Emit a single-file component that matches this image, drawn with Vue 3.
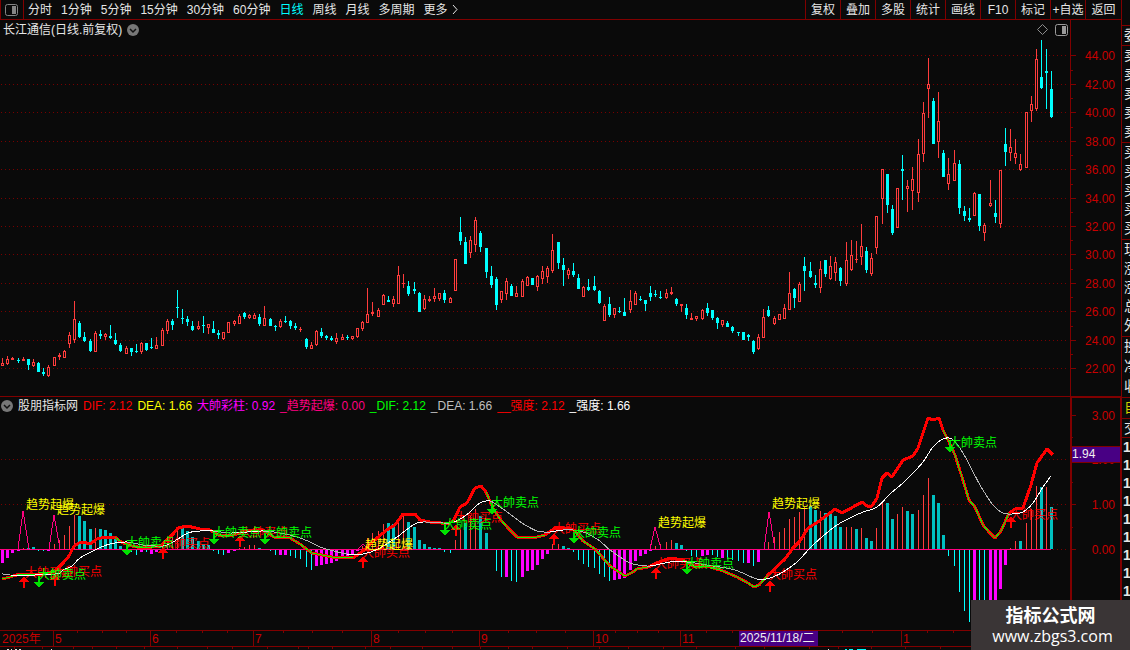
<script setup>
const periods = ['分时', '1分钟', '5分钟', '15分钟', '30分钟', '60分钟', '日线', '周线', '月线', '多周期']
const tools = ['复权', '叠加', '多股', '统计', '画线', 'F10', '标记', '+自选', '返回']

const quoteGroups = [
  { size: 'mid', rows: ['委'] },
  { size: 'mid', rows: ['卖', '卖', '卖', '卖', '卖'] },
  { size: 'mid', rows: ['买', '买', '买', '买', '买'] },
  { size: 'mid', rows: ['现', '涨', '涨', '总', '外'] },
  { size: 'tall', rows: ['换', '净', '收'] },
  { size: 'tall gold', rows: ['自'] },
  { size: 'short', rows: ['交'] },
  { size: 'short ticks', rows: ['1', '1', '1', '1', '1', '1', '1', '1', '1'] }
]

const legend = [
  { text: 'DIF: 2.12', tone: 'red' },
  { text: 'DEA: 1.66', tone: 'yellow' },
  { text: '大帥彩柱: 0.92', tone: 'magenta' },
  { text: '_趋势起爆: 0.00', tone: 'pink' },
  { text: '_DIF: 2.12', tone: 'green' },
  { text: '_DEA: 1.66', tone: 'grey' },
  { text: '__强度: 2.12', tone: 'red' },
  { text: '_强度: 1.66', tone: 'white' }
]

const xOf = i => Math.floor(2.6 + (i * 36) / 7)

/* direction, high, body top, body bottom, low */
const candleData = `
r358 363 366 366;r356 359 364 365;r357 358 360 360;c358 360 361 363;r357 359 361 361;c359 359 365 370;r359 362 366 367;
c362 363 372 372;c368 372 374 376;r365 367 376 377;r357 357 366 366;r353 355 357 360;r350 351 358 358;r332 335 344 348;
r301 319 340 343;c321 323 337 338;c332 337 341 342;c339 341 351 352;r331 333 352 352;c330 334 336 339;r333 334 337 340;
c325 336 338 339;c333 340 344 345;c343 345 351 352;r346 348 354 354;c348 348 352 356;c344 351 352 353;r342 343 352 354;
c343 343 350 351;c338 347 348 349;r337 345 349 349;r328 330 346 346;r319 321 331 334;c319 321 325 330;c290 307 308 318;
c309 318 319 324;c316 319 322 326;c321 326 330 331;r321 326 329 330;c316 325 326 333;r324 324 328 334;c321 329 333 333;
c330 333 335 339;r332 332 339 340;r322 322 333 333;r320 321 324 326;r314 316 324 324;c312 313 317 319;r314 315 318 319;
r313 315 319 319;c314 317 324 326;r306 318 326 326;c318 319 326 326;c325 326 327 331;r319 321 327 328;c316 321 322 323;
c320 321 326 329;c323 326 328 330;r327 329 330 332;c338 339 347 349;r342 345 349 349;r330 331 345 346;c328 332 336 338;
c335 336 338 340;c336 338 340 341;r333 338 342 344;r334 337 340 340;c335 337 338 340;r336 336 339 340;r328 328 337 338;
r321 322 329 331;r288 314 323 323;r302 312 314 316;r308 310 317 317;r294 295 305 305;c296 300 302 302;r296 299 304 307;
r266 275 304 304;r274 283 284 288;c281 286 294 296;c282 289 291 294;c292 293 312 312;r295 299 309 310;r296 299 301 302;
r288 296 299 302;r293 293 299 301;c290 293 300 303;r297 298 303 303;r259 259 291 291;c217 232 241 245;c237 242 264 264;
r236 240 253 258;r217 220 245 252;c231 233 247 252;c248 248 272 278;c266 276 285 288;c277 279 305 310;r291 291 300 303;
r278 281 294 300;c284 286 296 296;r286 293 297 297;r279 281 297 297;r276 277 286 286;c278 278 285 285;r275 276 287 291;
r266 271 279 284;r266 268 277 283;r234 250 271 273;c242 242 263 269;c258 265 270 286;r268 270 275 279;c263 271 275 277;
c274 278 289 289;r286 287 297 297;c279 287 290 291;c276 286 290 291;c290 291 303 304;r304 306 321 321;c297 304 315 317;
r308 308 315 318;c307 311 312 313;c298 312 316 316;r290 301 310 313;r291 293 305 305;c296 299 300 301;c300 300 304 311;
c286 293 297 301;c290 294 295 297;c291 297 298 299;r289 293 298 299;r287 292 294 295;c298 299 304 306;r304 304 306 312;
c304 308 315 319;r313 318 320 320;r316 316 319 321;r309 310 319 320;c303 308 313 316;c310 310 318 320;c317 318 323 329;
r320 320 325 327;c321 323 327 327;c326 327 331 333;c332 332 333 336;c332 332 340 340;c334 335 337 341;c340 341 352 354;
r334 337 349 350;r309 317 338 338;c306 310 316 317;r316 318 324 325;r314 314 320 320;r304 308 319 319;r272 293 310 310;
c288 289 298 308;r282 284 302 302;c257 266 271 291;c262 271 277 278;c275 283 285 288;r261 269 288 293;c260 260 274 277;
r256 266 279 280;r257 262 273 281;c267 268 281 286;r242 260 284 286;r240 255 270 271;r241 259 260 263;r224 246 257 265;
c247 251 270 273;r253 258 274 276;r216 216 248 254;r169 169 199 224;c174 174 205 213;c205 209 233 235;r188 188 228 228;
c155 169 171 200;r180 186 189 212;r167 179 191 210;r139 154 193 202;r102 113 154 162;r58 84 89 118;c98 101 144 144;
r92 121 142 158;c150 153 177 177;r158 174 184 190;r150 163 181 181;c160 164 208 214;c206 211 216 221;c208 218 220 222;
r192 193 216 216;c194 194 226 231;r223 225 233 241;r180 203 206 207;c200 213 217 223;r170 170 224 228;c128 144 152 166;
r129 147 153 161;r139 153 158 164;r154 164 170 171;r112 112 168 168;r96 104 111 122;r49 59 109 111;c40 77 88 89;
c49 71 73 109;c71 89 117 118`

const box = (x, y, w, h) => `M${x} ${y}h${w}v${h}h${-w}z`

const candlePaths = { r: '', c: '' }
candleData.trim().split(';').forEach((entry, i) => {
  const s = entry.trim()
  const kind = s[0]
  const [high, top, bottom, low] = s.slice(1).split(' ').map(Number)
  const x = xOf(i)
  let d = box(x - 1, top, 3, Math.max(1, bottom - top))
  if (kind === 'r' && bottom - top > 2) d += box(x, top + 1, 1, bottom - top - 2)
  if (top > high) d += box(x, high, 1, top - high)
  if (low > bottom) d += box(x, bottom, 1, low - bottom)
  candlePaths[kind] += d
})

/* r: thin up, t: wide up, c: thin down, m: wide down */
const barData = `
m563 m558 m553 m551 r548 t548 t547 c551 c551 m551 r544 r540 r535 r526 r515 t516 t521 t529 r528 t529 t530 t533 t538 t546
c551 c552 c555 m552 c552 m554 m552 r547 r540 r535 r528 t528 t531 t537 t541 t544 t545 c551 c554 c555 m553 m551 r548 r547
r545 r545 t548 t549 c551 c555 m555 m555 c556 c558 c559 c567 c570 m566 m565 m564 m563 m561 m559 m558 m554 m551 r546 r538
r533 r531 r524 t523 t524 r518 r516 t522 t527 t540 t544 t547 t548 t548 c552 c553 r540 r530 t523 r516 r509 t516 t533 c550
c571 c577 m577 c581 c582 m577 m571 m570 m565 m559 m554 r544 r544 t546 t548 c552 c560 c564 c567 c568 c574 c577 c581 m580
m579 m578 m570 m561 m556 m554 m551 r546 r544 r542 r540 t543 t545 c551 c556 c557 m556 m555 c555 c557 m558 c559 c560 c561
c563 m563 c566 m562 c550 r542 r537 r532 r528 r519 r517 r512 r507 t506 t510 r511 t513 t514 t516 t527 r527 r527 t529 r528
t538 t541 r528 r502 t503 t519 r514 r507 t511 t514 r510 r495 r478 t495 t503 t535 c556 c566 c592 c611 c622 m622 c622 c622
m622 m622 m589 m565 r548 r541 t541 r523 r509 r486 t487 r487 t507`
const barPaths = { r: '', t: '', c: '', m: '' }
barData.trim().split(/\s+/).forEach((entry, i) => {
  const kind = entry[0]
  const y = Number(entry.slice(1))
  const x = xOf(i)
  const wide = kind === 't' || kind === 'm'
  const up = kind === 't' || kind === 'r'
  const h = up ? 549 - y : y - 550
  if (h > 0) barPaths[kind] += box(wide ? x - 1 : x, up ? y : 550, wide ? 3 : 1, h)
})

const parse = text => text.trim().split(/\s+/).map(p => p.split(',').map(Number))
const dif = parse(`2,579 10,577 20,574 33,574 40,575 55,571 63,563 69,556 74,546 79,543 83,542 90,544 97,539 105,537 115,537
121,542 132,546 143,548 160,546 167,540 173,534 178,528 187,526 200,529 210,530 220,536 233,535 247,531 263,530 274,537
290,538 300,544 312,553 332,557 353,558 363,551 377,538 388,529 395,525 403,514 415,514 420,520 430,522 441,523 448,524
454,520 460,507 467,503 475,488 481,486 486,492 493,508 500,519 508,528 517,537 533,538 545,535 555,528 567,528 574,530
583,541 595,549 610,566 625,576 633,572 637,569 648,567 657,563 670,558 683,560 693,566 710,567 723,571 737,577 748,583
754,587 759,585 768,575 785,559 793,548 800,541 808,528 818,522 835,509 842,513 853,507 862,502 867,506 872,506 877,498
882,478 887,473 892,477 903,460 913,456 918,448 928,418 933,420 939,418 943,430 949,442 955,455 962,477 969,500 975,507
983,525 989,532 995,538 1001,531 1009,513 1015,509 1023,508 1031,485 1037,463 1047,449 1053,455`)
const dea = parse(`2,573 10,575 55,574 63,570 72,566 80,558 97,549 110,544 127,542 143,545 163,546 173,542 188,533 200,531
213,531 230,533 247,532 263,531 280,533 297,537 310,542 320,547 330,550 347,554 363,554 378,549 397,537 413,525 423,522
450,523 462,518 470,512 480,503 490,501 500,507 510,514 522,523 537,531 550,532 563,530 580,531 597,539 610,550 623,559
633,564 650,566 670,562 687,562 713,566 735,570 757,579 770,578 783,572 797,562 810,548 823,536 837,525 850,518 863,512
877,507 890,494 903,483 913,473 923,462 933,447 943,439 952,439 963,453 980,485 993,505 1003,513 1012,514 1023,512
1033,503 1043,487 1051,476`)
const points = list => list.map(p => p.join(',')).join(' ')
const difPoints = points(dif)
const weakRanges = [[2, 55], [115, 160], [210, 233], [263, 353], [430, 454], [486, 545], [574, 648], [683, 768], [943, 1009]]
const weakLines = weakRanges.map(([a, b]) => points(dif.filter(p => p[0] >= a && p[0] <= b)))

/* the slow line is a smooth curve, drawn grey wherever it falls */
const slow = { rise: '', fall: '' }
for (let i = 1; i < dea.length; i++) {
  const a = dea[i - 1]
  const b = dea[i]
  const before = dea[i - 2] || a
  const after = dea[i + 1] || b
  const c1 = [a[0] + (b[0] - before[0]) / 6, a[1] + (b[1] - before[1]) / 6]
  const c2 = [b[0] - (after[0] - a[0]) / 6, b[1] - (after[1] - a[1]) / 6]
  slow[b[1] > a[1] ? 'fall' : 'rise'] += `M${a}C${c1} ${c2} ${b}`
}

const spikes = [[18, 511, 29], [49, 515, 60], [358, 544, 368], [650, 527, 661], [764, 512, 775]]
  .map(([a, y, b]) => `${a},549 ${Math.floor((a + b) / 2)},${y} ${b},549`)

const marks = [
  { tone: 'red', text: '大帥买点', at: [[25, 572], [54, 571], [162, 543], [240, 532], [362, 552], [455, 517], [553, 528], [655, 563], [769, 574], [1010, 514]] },
  { tone: 'green', text: '大帥卖点', at: [[38, 574], [126, 542], [213, 532], [264, 532], [444, 524], [491, 502], [573, 532], [686, 563], [949, 442]] },
  { tone: 'yellow', text: '趋势起爆', at: [[26, 504], [57, 509], [365, 544], [658, 522], [772, 503]] }
]
const upArrows = [[24, 576], [55, 574], [163, 547], [240, 535], [363, 556], [456, 524], [554, 533], [656, 567], [770, 580], [1011, 516]]
  .map(([x, y]) => `M${x} ${y}l5 6h-4v6h-2v-6h-4z`).join('')
const downArrows = [[39, 588], [127, 556], [214, 545], [265, 545], [445, 536], [492, 515], [574, 544], [687, 575], [950, 453]]
  .map(([x, y]) => `M${x} ${y}l-5 -6h4v-6h2v6h4z`).join('')

const priceLevels = [
  [55, '44.00'], [84, '42.00'], [112, '40.00'], [141, '38.00'], [169, '36.00'], [198, '34.00'],
  [226, '32.00'], [254, '30.00'], [283, '28.00'], [311, '26.00'], [340, '24.00'], [368, '22.00']
]
const priceMinor = [70, 98, 127, 155, 184, 212, 240, 269, 297, 326, 354]
const macdLevels = [[415, '3.00'], [459, '2.00'], [504, '1.00'], [549, '0.00']]
const macdMinor = [437, 482, 527]
const months = [[53, '5'], [150, '6'], [253, '7'], [371, '8'], [479, '9'], [593, '10'], [680, '11'], [901, '1']]
const dayTicks = [77, 102, 126, 176, 202, 227, 283, 312, 342, 398, 425, 452, 508, 536, 565, 615, 637, 658, 706, 732, 842, 872, 927, 953]
const lowTicks = [14, 42, 73, 92, 116, 144, 177, 207, 232, 267, 298, 308, 332, 365, 390, 422, 452, 480, 508, 532, 567, 599, 628, 663, 696, 735, 764, 809, 838, 871, 905, 940]
const tickPath = (list, y) => list.map(x => box(x, y, 1, 2)).join('')
</script>

<template>
  <div class="terminal">
    <main class="board">
      <header class="bar">
        <button class="pane-toggle" type="button" aria-label="侧栏">
          <svg width="13" height="12" viewBox="0 0 13 12"><rect x="0.500" y="0.500" width="12" height="11" rx="2" fill="none" stroke="#858585" /><rect x="7" y="2" width="4" height="8" fill="#858585" /></svg>
        </button>
        <nav class="periods">
          <button v-for="p in periods" :key="p" type="button" :class="{ active: p === '日线' }">{{ p }}</button>
          <button type="button" class="more">更多<svg width="6" height="11" viewBox="0 0 6 11"><path d="M1 1l4 4.500l-4 4.500" fill="none" stroke="#e6e6e6" /></svg></button>
        </nav>
        <div class="tools">
          <button v-for="t in tools" :key="t" type="button">{{ t }}</button>
        </div>
      </header>

      <section class="panel">
        <div class="caption">
          <h1>长江通信(日线.前复权)</h1>
          <button class="round" type="button" aria-label="展开">
            <svg width="12" height="12" viewBox="0 0 12 12"><circle cx="6" cy="6" r="6" fill="#777" /><path d="M3 5l3 3l3-3" fill="none" stroke="#111" stroke-width="1.500" /></svg>
          </button>
          <svg class="diamond" width="11" height="11" viewBox="0 0 11 11"><path d="M5.500 0.500l5 5l-5 5l-5-5z" fill="none" stroke="#8c8c8c" /></svg>
          <button class="pane" type="button" aria-label="布局">
            <svg width="13" height="12" viewBox="0 0 13 12"><rect x="0.500" y="0.500" width="12" height="11" rx="2" fill="none" stroke="#9a9a9a" /><rect x="7" y="2" width="4" height="8" fill="#9a9a9a" /></svg>
          </button>
        </div>
        <svg class="chart" viewBox="0 20 1121 377" role="img" aria-label="日线">
          <line v-for="l in priceLevels" :key="l[1]" x1="1" x2="1069" :y1="l[0] + 0.5" :y2="l[0] + 0.5" class="dots" />
          <rect x="1070" y="20" width="1" height="377" class="frame" />
          <rect v-for="l in priceLevels" :key="'t' + l[0]" x="1071" :y="l[0]" width="5" height="1" class="frame" />
          <rect v-for="y in priceMinor" :key="y" x="1071" :y="y" width="2" height="1" class="frame" />
          <text v-for="l in priceLevels" :key="'p' + l[1]" x="1115" :y="l[0] + 5" class="scale">{{ l[1] }}</text>
          <path :d="candlePaths.r" fill="#ff3c3c" fill-rule="evenodd" />
          <path :d="candlePaths.c" fill="#00ffff" />
          <rect x="0" y="396" width="1121" height="1" class="frame" />
        </svg>
      </section>

      <section class="panel">
        <div class="legend">
          <button class="round" type="button" aria-label="展开">
            <svg width="12" height="12" viewBox="0 0 12 12"><circle cx="6" cy="6" r="6" fill="#777" /><path d="M3 5l3 3l3-3" fill="none" stroke="#111" stroke-width="1.500" /></svg>
          </button>
          <h2>股朋指标网</h2>
          <span v-for="l in legend" :key="l.text" :class="l.tone">{{ l.text }}</span>
        </div>
        <svg class="chart" viewBox="0 397 1121 250" role="img" aria-label="股朋指标网">
          <line v-for="y in [459, 504, 549]" :key="y" x1="1" x2="1069" :y1="y + 0.5" :y2="y + 0.5" class="dots" />
          <path :d="barPaths.r" fill="#ff3c3c" />
          <path :d="barPaths.t" fill="#00c0c0" />
          <path :d="barPaths.c" fill="#00ffff" />
          <path :d="barPaths.m" fill="#ff00ff" />
          <polyline v-for="s in spikes" :key="s" :points="s" class="spike" />
          <rect x="0" y="549" width="1051" height="1" fill="#ff0080" />
          <text v-for="p in marks[0].at" :key="'b' + p[0]" :x="p[0]" :y="p[1] + 5" class="red">{{ marks[0].text }}</text>
          <polyline :points="difPoints" class="line dif" />
          <polyline v-for="w in weakLines" :key="w" :points="w" class="line weak" />
          <path :d="slow.rise" class="line dea" />
          <path :d="slow.fall" class="line dea-falling" />
          <path :d="upArrows" fill="#ff0000" />
          <path :d="downArrows" fill="#00e000" />
          <g v-for="m in marks.slice(1)" :key="m.text" :class="m.tone">
            <text v-for="p in m.at" :key="p[0]" :x="p[0]" :y="p[1] + 5">{{ m.text }}</text>
          </g>

          <rect x="1070" y="397" width="2" height="250" class="frame" />
          <rect x="1070" y="397" width="51" height="1" class="frame" />
          <rect x="1120" y="397" width="1" height="250" class="frame" />
          <rect v-for="l in macdLevels" :key="'m' + l[0]" x="1072" :y="l[0]" width="4" height="1" class="frame" />
          <rect v-for="y in macdMinor" :key="'n' + y" x="1072" :y="y" width="1" height="1" class="frame" />
          <text v-for="l in macdLevels" :key="'v' + l[1]" x="1115" :y="l[0] + 5" class="scale">{{ l[1] }}</text>
          <rect x="1072" y="446" width="48" height="17" class="frame" />
          <rect x="1072" y="447" width="48" height="15" fill="#480084" />
          <text x="1072" y="458" class="bright">1.94</text>

          <rect x="0" y="630" width="1070" height="1" class="frame" />
          <path :d="tickPath(dayTicks, 631)" class="frame" />
          <rect x="0" y="646" width="1121" height="1" class="frame" />
          <text x="2" y="643" class="date">2025年</text>
          <g v-for="m in months" :key="m[0]">
            <rect :x="m[0]" y="631" width="1" height="15" class="frame" />
            <text :x="m[0] + 2" y="643" class="date">{{ m[1] }}</text>
          </g>
          <rect x="739" y="631" width="79" height="15" fill="#480084" />
          <text x="740" y="642" class="bright">2025/11/18/二</text>
        </svg>
      </section>

      <footer class="tabs">
        <svg class="chart" viewBox="0 647 1121 3">
          <path :d="tickPath(lowTicks, 647)" class="frame" />
          <path d="M7 649h2v1h-2zM11 649h1v1h-1zM15 649h2v1h-2zM19 649h2v1h-2zM51 649h1v1h-1zM828 649h1v1h-1z" fill="#e6e6e6" />
          <path d="M845 649h2v1h-2zM849 649h4v1h-4zM857 649h9v1h-9z" fill="#00ffff" />
        </svg>
      </footer>
    </main>

    <aside class="quotes">
      <div v-for="(g, i) in quoteGroups" :key="i" class="group" :class="g.size">
        <span v-for="(r, j) in g.rows" :key="j">{{ r }}</span>
      </div>
    </aside>

    <div class="brand">
      <strong>指标公式网</strong>
      <a href="#">www.zbgs3.com</a>
    </div>
  </div>
</template>

<style>
body {
  background: #0a0a0a;
}
</style>

<style scoped>
.terminal {
  position: relative;
  display: flex;
  min-height: 100vh;
  overflow: hidden;
  background: #0a0a0a;
  color: #e6e6e6;
  font: 12px/16px "Liberation Sans", "Noto Sans CJK SC", sans-serif;
}
button {
  margin: 0;
  padding: 0;
  border: 0;
  background: none;
  color: inherit;
  font: inherit;
  white-space: nowrap;
}
svg {
  display: block;
}
.board {
  flex: 1;
  min-width: 0;
  display: flex;
  flex-direction: column;
}
.bar {
  display: flex;
  height: 19px;
  border-bottom: 1px solid #800000;
}
.pane-toggle {
  width: 24px;
  padding-left: 4px;
  border: solid #800000;
  border-width: 0 1px;
}
.periods {
  flex: 1;
  display: flex;
  gap: 9px;
  padding-left: 4px;
}
.periods .active {
  color: #00ffff;
}
.more {
  display: flex;
  align-items: center;
  gap: 4px;
}
.tools {
  display: flex;
}
.tools button {
  width: 35px;
  border-left: 1px solid #800000;
}
.tools button:last-child {
  width: 36px;
}
.panel {
  position: relative;
}
.caption,
.legend {
  position: absolute;
  inset: 0 0 auto 0;
  display: flex;
  align-items: center;
  white-space: nowrap;
}
.caption {
  height: 19px;
  gap: 5px;
  padding: 0 53px 0 3px;
}
.legend {
  height: 17px;
  gap: 5px;
  padding-left: 1px;
}
h1,
h2 {
  margin: 0;
  font-size: 12px;
  font-weight: 400;
}
.diamond {
  margin-left: auto;
}
.pane {
  margin-left: 2px;
}
.chart {
  width: 100%;
  height: auto;
  shape-rendering: crispEdges;
}
.frame {
  fill: #800000;
}
.dots {
  stroke: #780000;
  stroke-width: 1;
  stroke-dasharray: 1 3;
}
.scale {
  fill: #c80000;
  text-anchor: end;
}
.date {
  fill: #c80000;
}
.bright {
  fill: #f0f0f0;
}
.line {
  fill: none;
  stroke-linejoin: round;
}
.dif {
  stroke: #ff0000;
  stroke-width: 3;
}
.weak {
  stroke: #00ff00;
  stroke-width: 1;
}
.dea {
  stroke: #ffffff;
}
.dea-falling {
  stroke: #b4b4b4;
}
.spike {
  fill: none;
  stroke: #ff0080;
}
.red {
  color: #ff0000;
  fill: #ff0000;
}
.yellow {
  color: #ffff00;
  fill: #ffff00;
}
.green {
  color: #00ff00;
  fill: #00ff00;
}
.magenta {
  color: #ff00ff;
}
.pink {
  color: #ff0080;
}
.grey {
  color: #c0c0c0;
}
.white {
  color: #ffffff;
}
.tabs {
  height: 3px;
  overflow: hidden;
}
.quotes {
  width: 8px;
  padding-top: 25px;
  border-left: 1px solid #800000;
  overflow: hidden;
  font-size: 14px;
}
.group {
  border-top: 1px solid #800000;
  padding-left: 2px;
}
.group span {
  display: block;
  height: 19px;
  line-height: 19px;
  white-space: nowrap;
}
.mid span:last-child:not(:first-child) {
  height: 20px;
}
.tall span {
  height: 20px;
}
.short span {
  height: 18px;
}
.gold {
  color: #d0d000;
}
.ticks {
  padding-left: 1px;
  font-weight: 700;
}
.brand {
  position: absolute;
  right: 0;
  bottom: 0;
  display: flex;
  flex-direction: column;
  align-items: center;
  width: 159px;
  height: 44px;
  padding-top: 6px;
  background: #3a3536;
  color: #ffffff;
}
.brand strong {
  font-size: 18px;
  line-height: 20px;
}
.brand a {
  padding-left: 4px;
  color: inherit;
  font: 16px/20px "Open Sans", sans-serif;
  text-decoration: none;
}
</style>
